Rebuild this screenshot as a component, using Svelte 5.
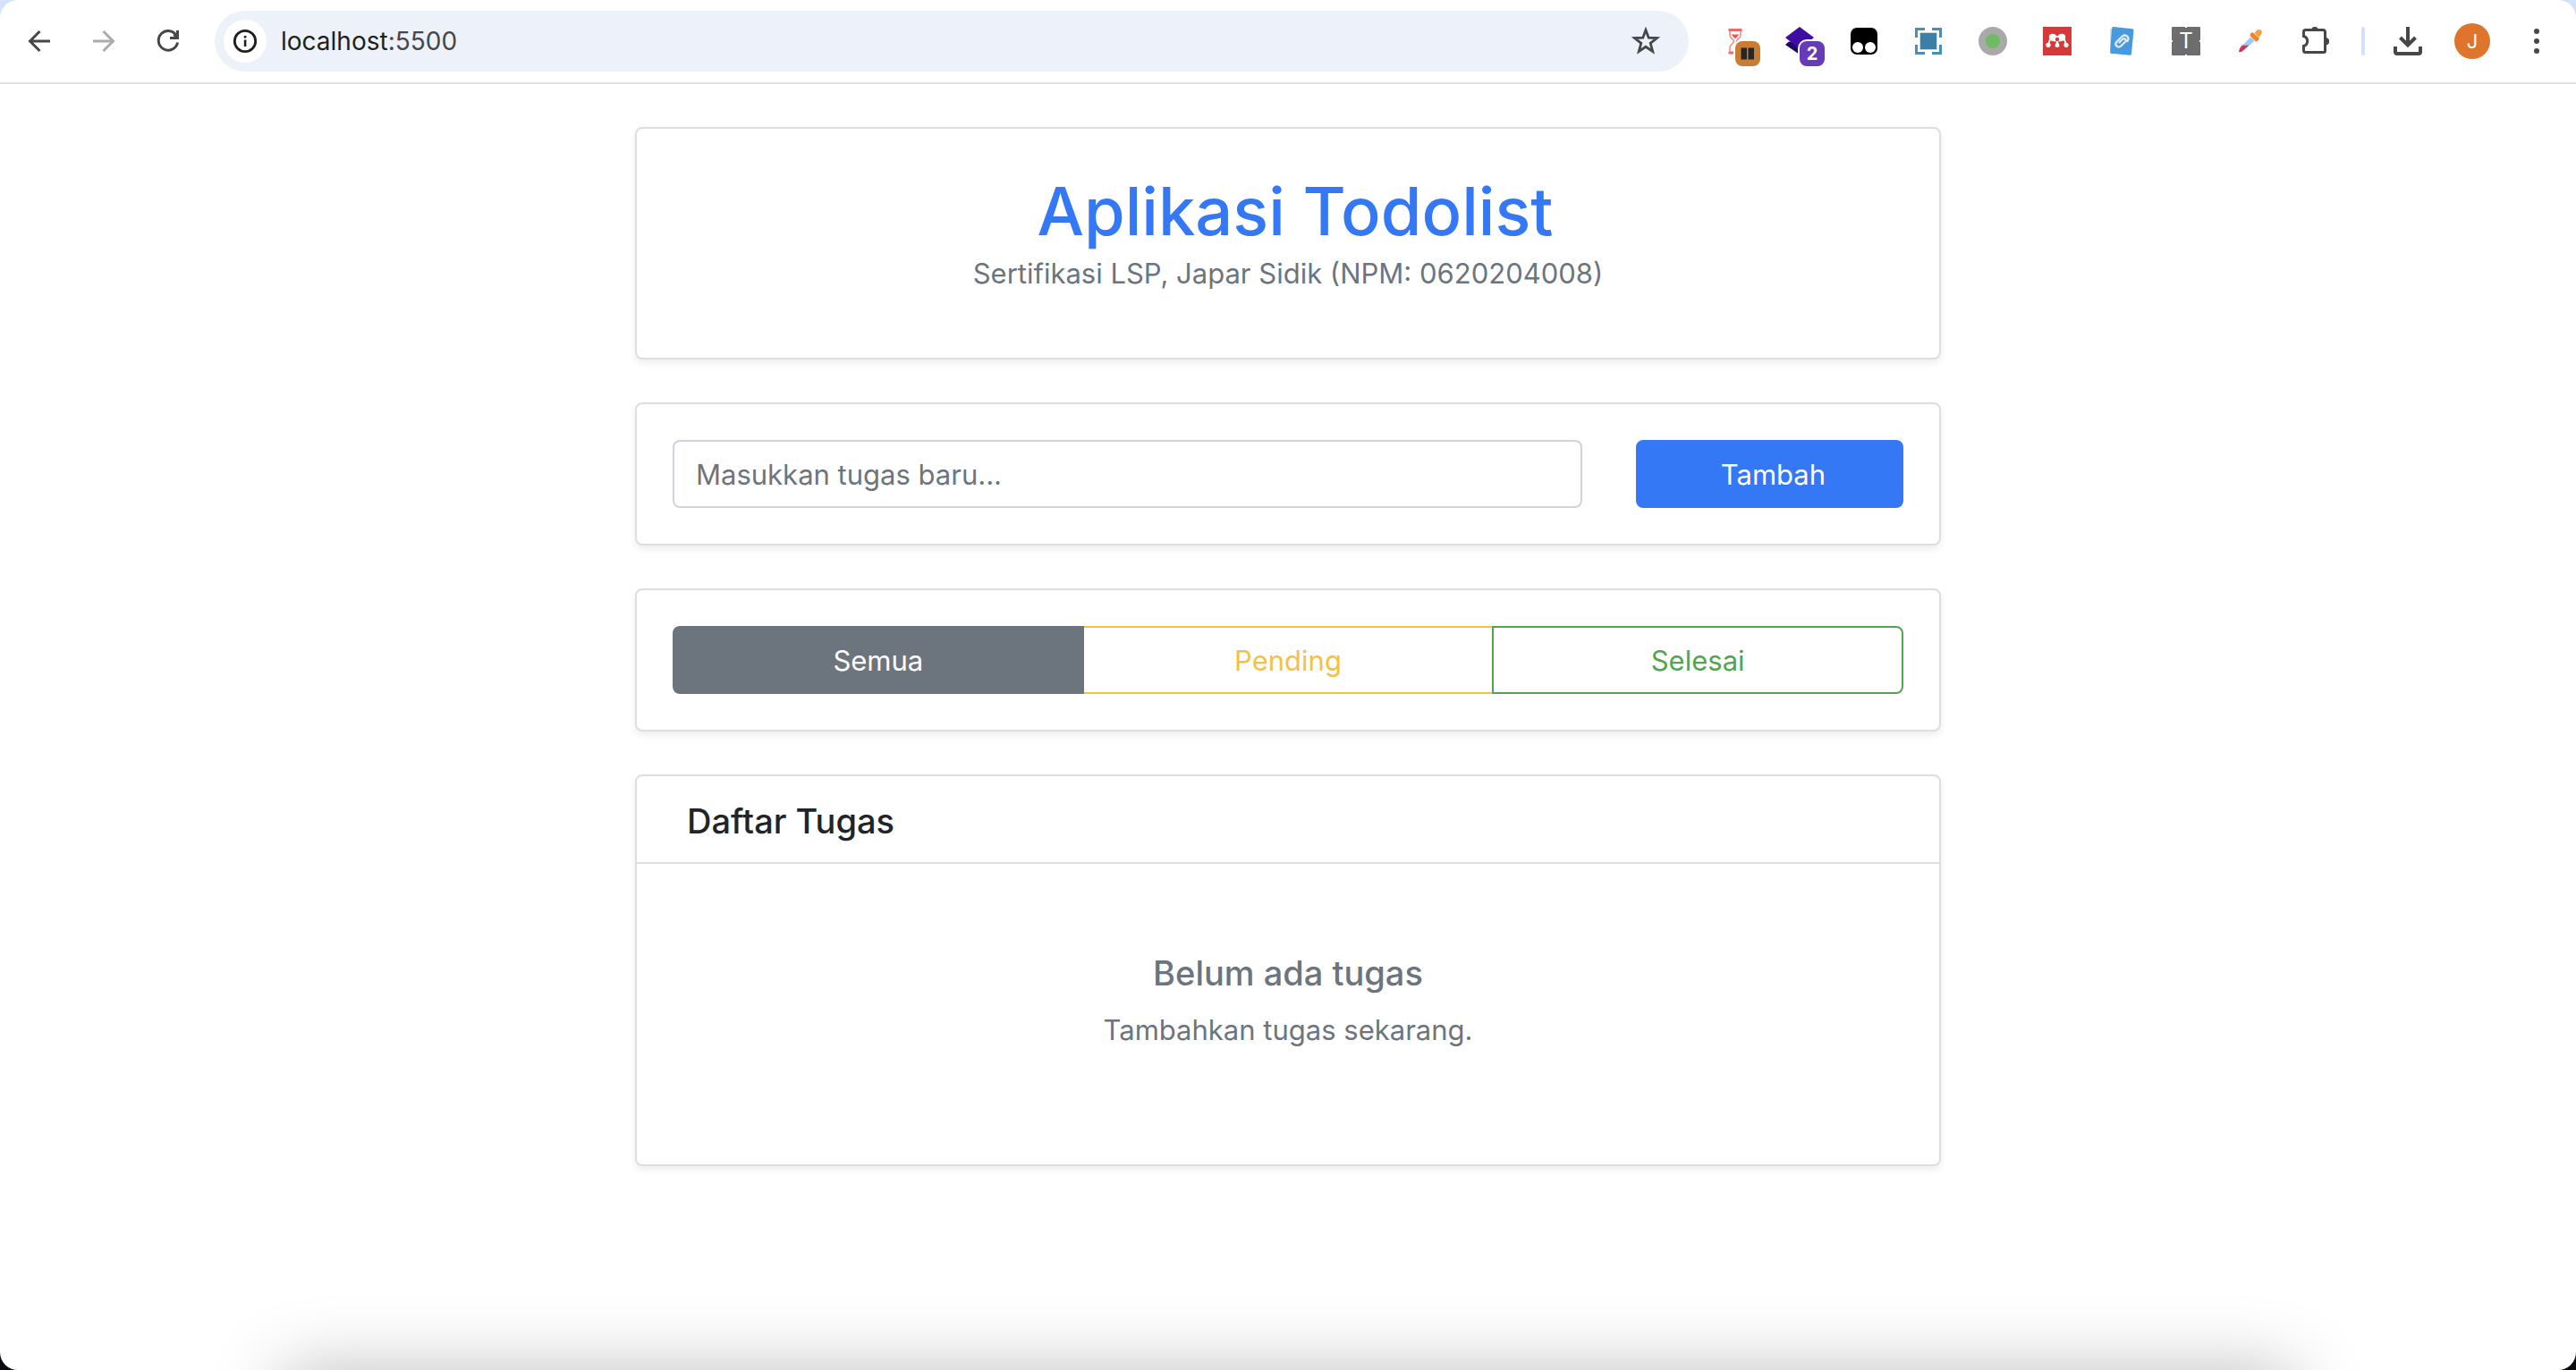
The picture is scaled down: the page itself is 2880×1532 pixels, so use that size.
<script>
  let address = $state('localhost:5500');
  let task = $state('');
  let filter = $state('semua');

  const filters = [
    { id: 'semua', label: 'Semua' },
    { id: 'pending', label: 'Pending' },
    { id: 'selesai', label: 'Selesai' }
  ];
</script>

<div class="desktop">
  <div class="window">
    <header class="toolbar">
      <nav class="group" aria-label="Navigasi">
        <button class="tool" type="button" aria-label="Kembali">
          <svg viewBox="0 0 32 32" fill="none" stroke="#474747" stroke-width="3"><path d="M28 16H6M16.500 5 5.500 16l11 11" /></svg>
        </button>
        <button class="tool" type="button" aria-label="Maju" disabled>
          <svg viewBox="0 0 32 32" fill="none" stroke="#ababab" stroke-width="3"><path d="M4 16h22M15.500 5l11 11-11 11" /></svg>
        </button>
        <button class="tool" type="button" aria-label="Muat ulang">
          <svg viewBox="0 0 32 32" fill="none" stroke="#474747" stroke-width="3"><path d="M25.700 10.500A10.800 10.800 0 1 0 26.600 17.500M26.500 4v8.500H18M26 12 22.500 8.500" /></svg>
        </button>
      </nav>

      <form class="address" onsubmit={(e) => e.preventDefault()}>
        <button class="site-info" type="button" aria-label="Informasi situs">
          <svg viewBox="0 0 32 32"><circle cx="16" cy="16" r="11.700" fill="none" stroke="#1f1f1f" stroke-width="2.800" /><path d="M14.800 14.500h2.600v7.500h-2.600zM14.800 10h2.600v2.600h-2.600z" fill="#1f1f1f" /></svg>
        </button>
        <label class="url">
          <span class="shown" aria-hidden="true">localhost<span class="port">:5500</span></span>
          <input aria-label="Alamat" bind:value={address} />
        </label>
        <button class="tool" type="button" aria-label="Tandai halaman ini">
          <svg viewBox="0 0 32 32"><path d="M16 3.500 19.200 12.200 28.500 12.500 21.200 18.300 23.700 27.500 16 22.300 8.300 27.500 10.800 18.300 3.500 12.500 12.800 12.200Z" fill="none" stroke="#474747" stroke-width="2.800" /></svg>
        </button>
      </form>

      <div class="group" role="group" aria-label="Ekstensi">
        <button class="tool" type="button" aria-label="Pengatur waktu">
          <svg viewBox="0 0 32 32">
            <path d="M8.500 2h15v3h-15zM8.500 27.500h15v3h-15z" fill="#ee6a68" />
            <path d="M10 5v4.500c0 3 4.500 4.500 4.500 6.700S10 20 10 23v4.500M22 5v4.500c0 3-4.500 4.500-4.500 6.700S22 20 22 23v4.500" fill="none" stroke="#f08f8d" stroke-width="1.600" />
            <path d="M11.500 8.500h9L16 13.500z" fill="#e85553" />
          </svg>
          <span class="badge orange"><svg viewBox="0 0 28 28"><path d="M6.500 7.500h6.500v13H6.500zM14.500 7.500H21v13h-6.500z" fill="#262626" /></svg></span>
        </button>
        <button class="tool" type="button" aria-label="Lapisan">
          <svg viewBox="0 0 32 32"><path d="M0 20 4 16.500 28 20 16 31Z" fill="#1e0468" /><path d="M16 0 32 12 16 25 0 12Z" fill="#400ca4" /></svg>
          <span class="badge purple">2</span>
        </button>
        <button class="tool" type="button" aria-label="Skrip pengguna">
          <svg viewBox="0 0 32 32"><rect x="1" y="1" width="30" height="30" rx="7" /><circle cx="9" cy="23" r="6" fill="#fff" /><circle cx="23" cy="23" r="6" fill="#fff" /></svg>
        </button>
        <button class="tool" type="button" aria-label="Tangkapan layar">
          <svg viewBox="0 0 32 32"><path d="M2.500 12V2.500H12M20 2.500h9.500V12M29.500 20v9.500H20M12 29.500H2.500V20" fill="none" stroke="#4a8fb4" stroke-width="3" /><rect x="6" y="6" width="20" height="20" fill="#c5dce8" /><rect x="7" y="7" width="18" height="18" fill="#3c80a6" /></svg>
        </button>
        <button class="tool" type="button" aria-label="Status">
          <svg viewBox="0 0 32 32"><circle cx="16" cy="16" r="16" fill="#a9a9a9" /><circle cx="16" cy="16" r="8" fill="#70ba63" /></svg>
        </button>
        <button class="tool" type="button" aria-label="Referensi">
          <svg viewBox="0 0 32 32"><path d="M0 0h32v32H0z" fill="#d43a3a" /><g fill="#fff"><path d="M7.500 11 13 8.500 16 10.500 19 8.500l5.500 2.500-1 3.500-4 2h-7l-4-2z" /><circle cx="10.800" cy="11.800" r="4" /><circle cx="21.200" cy="11.800" r="4" /><circle cx="6" cy="20.300" r="2.600" /><circle cx="16" cy="20.300" r="2.600" /><circle cx="26" cy="20.300" r="2.600" /></g><path d="M8 14 6 20M16 15v5M24 14l2 6" stroke="#fff" stroke-width="1.800" /><circle cx="16" cy="14" r="2.200" fill="#d43a3a" /><path d="m9.500 21 3-4.500 2 1-1 3.500zM22.500 21l-3-4.500-2 1 1 3.500z" fill="#d43a3a" /></svg>
        </button>
        <button class="tool" type="button" aria-label="Tautan">
          <svg viewBox="0 0 32 32"><path d="M3 2.500 7 2v29l-4-1Z" fill="#dcdcdc" /><path d="M6.500 0 28 2.300Q29.600 2.600 29.500 4L27 30Q26.800 31.900 25 31.700L4.800 29.800Q3 29.500 3.200 28L5 2Q5.200 0 6.500 0Z" fill="#4799e0" /><path d="M13.500 17.500 17 14c2.200-2.200 5 .6 3 2.800l-4.500 4.400c-3.500 3.300-8.200-.9-5-4.500l5.500-5.500c4-4 9.500.5 6.500 4.800" fill="none" stroke="#e4eaf0" stroke-width="2.200" stroke-linecap="round" /></svg>
        </button>
        <button class="tool" type="button" aria-label="Teks">
          <svg viewBox="0 0 32 32"><rect width="32" height="32" rx="1" fill="#6d6d6d" /><path d="M15 0h2v1h-2zM15 31h2v1h-2zM0 15h1v2H0zM31 15h1v2h-1z" fill="#fff" /><text x="16" y="24" text-anchor="middle" font-family="Inter, sans-serif" font-size="24" fill="#fff">T</text></svg>
        </button>
        <button class="tool" type="button" aria-label="Pipet warna">
          <svg viewBox="0 0 32 32"><path d="M16.500 11.500 20.500 15.500 11 24.500 6.500 21Z" fill="#9bcbf8" /><path d="M6.500 20.800 14 20.800 9.500 25.200Q6 28.500 3.500 28.300L3 27.500Q4 23.500 6.500 20.800Z" fill="#d9315d" /><path d="m20.500 7 2-2.500c2-2 4.500-2 5.700-.5s.8 4-1 5.800L25 12Z" fill="#f6a43a" /><path d="m16 7.500 2.500-1.500L26 13l-2 3-2 .5-6.500-6.500Z" fill="#ea8438" /></svg>
        </button>
        <button class="tool" type="button" aria-label="Semua ekstensi">
          <svg viewBox="0 0 32 32"><path d="M5.500 3.500H25Q27.500 3.500 27.500 6V27Q27.500 28.500 26 28.500H5.500Q3.500 28.500 3.500 26.500V21.500A5.700 5.700 0 0 0 3.500 10.500V5.500Q3.500 3.500 5.500 3.500Z" fill="none" stroke="#474747" stroke-width="3" /><path d="M12 3a4.200 4.500 0 0 1 8 0zM28 12a4.200 4.200 0 0 1 0 8.500z" fill="#474747" /></svg>
        </button>
      </div>

      <div class="end">
        <span class="divider"></span>
        <button class="tool" type="button" aria-label="Unduhan">
          <svg viewBox="0 0 32 32" fill="none" stroke="#474747" stroke-width="4"><path d="M16 0v20M7.500 12 16 20.500 24.500 12M2 22v6q0 2 2 2h24q2 0 2-2v-6" /></svg>
        </button>
      </div>
      <button class="avatar" type="button" aria-label="Profil">J</button>
      <button class="tool" type="button" aria-label="Menu">
        <svg viewBox="0 0 32 32" fill="#474747"><circle cx="16" cy="5" r="3" /><circle cx="16" cy="16" r="3" /><circle cx="16" cy="27" r="3" /></svg>
      </button>
    </header>

    <main>
      <section class="card intro">
        <h1>Aplikasi Todolist</h1>
        <p>Sertifikasi LSP, Japar Sidik (NPM: 0620204008)</p>
      </section>

      <form class="card entry" onsubmit={(e) => e.preventDefault()}>
        <input aria-label="Tugas baru" placeholder="Masukkan tugas baru..." bind:value={task} />
        <button class="btn add" type="submit">Tambah</button>
      </form>

      <section class="card">
        <div class="filters" role="group" aria-label="Saring tugas">
          {#each filters as f}
            <button type="button" class="btn {f.id}" class:active={filter === f.id} aria-pressed={filter === f.id} onclick={() => (filter = f.id)}>{f.label}</button>
          {/each}
        </div>
      </section>

      <section class="card list">
        <h2>Daftar Tugas</h2>
        <div class="empty">
          <h3>Belum ada tugas</h3>
          <p>Tambahkan tugas sekarang.</p>
        </div>
      </section>
    </main>
  </div>
  <div class="dock-shadow"></div>
</div>

<style>
  :global(body) {
    margin: 0;
  }

  .desktop {
    background: linear-gradient(#d3e1fb 50%, #0a0a10 50%);
    font-family: Inter, 'Liberation Sans', sans-serif;
    font-size: 31px;
    line-height: 48px;
    color: #212529;
  }

  .desktop * {
    box-sizing: border-box;
  }

  .window {
    min-height: 100vh;
    background: #fff;
    border-radius: 20px;
    overflow: hidden;
  }

  button,
  input {
    font: inherit;
    margin: 0;
  }

  button {
    cursor: pointer;
  }

  h1,
  h2,
  h3,
  p {
    margin: 0;
  }

  /* Browser toolbar */
  .toolbar {
    display: flex;
    align-items: center;
    gap: 36px;
    padding: 12px 28px;
    border-bottom: 2px solid #e1e1e1;
  }

  .group {
    display: flex;
    gap: 40px;
  }

  .end {
    display: flex;
    gap: 32px;
  }

  .tool {
    position: relative;
    flex: none;
    width: 32px;
    height: 32px;
    padding: 0;
    border: 0;
    background: none;
  }

  .tool svg,
  .site-info svg {
    display: block;
    width: 32px;
    height: 32px;
  }

  .address {
    flex: 1;
    display: flex;
    align-items: center;
    gap: 16px;
    height: 68px;
    padding: 0 32px 0 10px;
    border-radius: 34px;
    background: #edf1fa;
  }

  .site-info {
    display: grid;
    place-items: center;
    width: 48px;
    height: 48px;
    padding: 0;
    border: 0;
    border-radius: 50%;
    background: #fff;
  }

  .url {
    position: relative;
    flex: 1;
    font-size: 28px;
    color: #1f1f1f;
  }

  .port {
    color: #474747;
  }

  /* The field lies over the two-tone address and takes the typing */
  .url input {
    position: absolute;
    inset: 0;
    width: 100%;
    padding: 0;
    border: 0;
    outline: 0;
    background: none;
    color: transparent;
    caret-color: #1f1f1f;
  }

  .badge {
    position: absolute;
    left: 16px;
    top: 16px;
    width: 28px;
    height: 28px;
    border-radius: 8px;
    box-shadow: 0 0 0 2px #fff;
    font-size: 20px;
    font-weight: 700;
    line-height: 28px;
    text-align: center;
    color: #fff;
  }

  .tool .badge svg {
    width: 28px;
    height: 28px;
  }

  .orange {
    background: #c97c33;
  }

  .purple {
    background: #673ab7;
  }

  .divider {
    width: 4px;
    height: 32px;
    border-radius: 2px;
    background: #d3e1fb;
  }

  .avatar {
    width: 40px;
    height: 40px;
    padding: 0;
    border: 0;
    border-radius: 50%;
    background: #df752c;
    color: #fff;
    font-size: 22px;
    line-height: 40px;
  }

  /* Page */
  main {
    display: flex;
    flex-direction: column;
    gap: 48px;
    max-width: 1460px;
    margin: 0 auto;
    padding: 48px 0;
  }

  .card {
    padding: 40px;
    border: 2px solid #dedede;
    border-radius: 8px;
    background: #fff;
    box-shadow: 0 4px 8px rgba(0, 0, 0, 0.075);
  }

  .intro {
    padding: 46px 40px 70px;
    text-align: center;
  }

  h1 {
    padding-left: 16px;
    font-size: 74px;
    font-weight: 500;
    line-height: 92px;
    color: #3478f6;
  }

  p,
  h3 {
    color: #6c757d;
  }

  .entry {
    display: grid;
    grid-template-columns: 17fr 5fr;
    gap: 60px;
  }

  .entry input {
    min-width: 0;
    height: 76px;
    padding: 0 24px;
    border: 2px solid #ced4da;
    border-radius: 8px;
    background: #fff;
    color: #212529;
  }

  .entry input::placeholder {
    color: #6c757d;
    opacity: 1;
  }

  .btn {
    height: 76px;
    padding: 2px 24px 0;
    border: 2px solid;
    border-radius: 8px;
    background: #fff;
  }

  .add {
    padding-left: 32px;
    border-color: #3478f6;
    background: #3478f6;
    color: #fff;
  }

  .filters {
    display: grid;
    grid-template-columns: repeat(3, 1fr);
  }

  .filters .btn {
    position: relative;
    margin: 0 -1px;
    border-radius: 0;
  }

  .filters .btn:first-child {
    margin-left: 0;
    border-radius: 8px 0 0 8px;
  }

  .filters .btn:last-child {
    margin-right: 0;
    border-radius: 0 8px 8px 0;
  }

  .filters .active {
    z-index: 1;
  }

  .semua {
    color: #6c757d;
  }

  .pending {
    color: #f6c143;
  }

  .selesai {
    color: #53a451;
  }

  .semua.active {
    border-color: #6c757d;
    background: #6c757d;
    color: #fff;
  }

  .pending.active {
    border-color: #f6c143;
    background: #f6c143;
    color: #000;
  }

  .selesai.active {
    border-color: #53a451;
    background: #53a451;
    color: #fff;
  }

  .list {
    padding: 0;
  }

  h2,
  h3 {
    font-size: 38px;
    font-weight: 500;
    line-height: 48px;
  }

  h2 {
    padding: 26px 56px 22px;
    border-bottom: 2px solid #dedede;
  }

  .empty {
    padding: 98px 40px 126px;
    text-align: center;
  }

  .empty h3 {
    margin-bottom: 16px;
  }

  .dock-shadow {
    position: fixed;
    left: 11%;
    right: 11%;
    top: 100%;
    height: 160px;
    box-shadow: 0 0 80px rgba(0, 0, 0, 0.26);
    pointer-events: none;
  }
</style>
